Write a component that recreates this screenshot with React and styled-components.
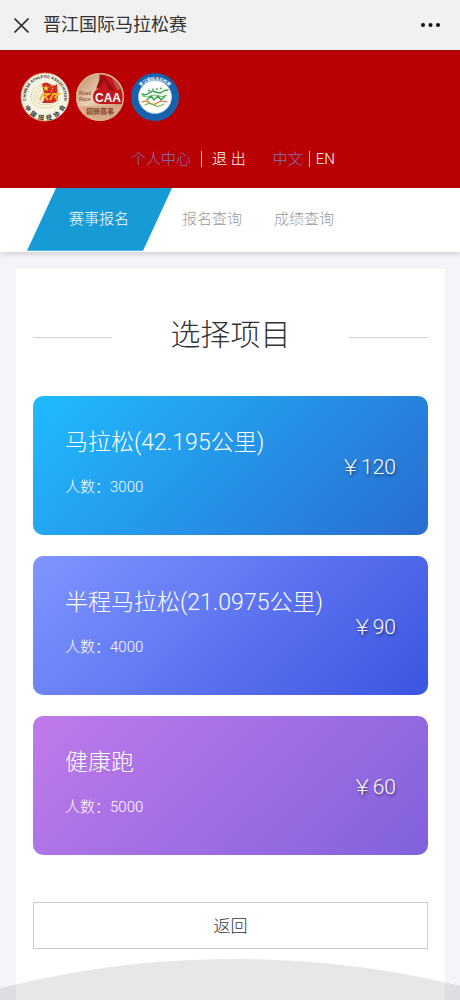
import React from "react";
import styled, { createGlobalStyle } from "styled-components";

const GlobalStyle = createGlobalStyle`
  * {
    box-sizing: border-box;
  }
  body {
    margin: 0;
    background: #f4f5f8;
    color: #333;
    font-family: Roboto, "Noto Sans CJK SC", sans-serif;
    font-weight: 300;
  }
  button {
    border: 0;
    padding: 0;
    background: none;
    color: inherit;
    font: inherit;
    cursor: pointer;
  }
  a {
    color: inherit;
    text-decoration: none;
  }
`;

const Page = styled.div`
  display: flex;
  flex-direction: column;
  min-height: 100vh;
`;

const TitleBar = styled.header`
  display: flex;
  align-items: center;
  height: 50px;
  padding: 0 18px 0 13px;
  background: #f1f1f1;
`;

const BarTitle = styled.span`
  flex: 1;
  margin-left: 13px;
  font-size: 18px;
  font-weight: 400;
  line-height: 24px;
`;

const IconButton = styled.button`
  display: flex;
`;

const Banner = styled.div`
  display: flex;
  flex-direction: column;
  justify-content: space-between;
  height: 138px;
  padding: 21px 20px 17px;
  border-top: 1px solid #a00008;
  background: #b90004;
`;

const Logos = styled.div`
  display: flex;
  gap: 5px;
`;

const UserLinks = styled.div`
  display: flex;
  justify-content: center;
  gap: 27px;
  padding-left: 6px;
  font-size: 15px;
  line-height: 24px;
`;

const LinkPair = styled.div`
  display: flex;
  align-items: center;
  gap: ${(props) => props.$gap}px;
`;

const UserLink = styled.a`
  color: ${(props) => (props.$muted ? "#7f7bb4" : "#fff")};
`;

const Divider = styled.span`
  width: 1px;
  height: 16px;
  background: #f3dcdc;
`;

const Tabs = styled.nav`
  display: flex;
  height: 64px;
  padding-left: 27px;
  background: #fff;
  box-shadow: 0 2px 6px rgba(0, 0, 0, 0.16);
`;

const Tab = styled.a`
  display: flex;
  align-items: center;
  justify-content: center;
  padding: ${(props) => (props.$active ? "0 43px 6px 42px" : "0 22px 6px 10px")};
  font-size: 15px;
  color: ${(props) => (props.$active ? "#fff" : "#999")};
  background: ${(props) => (props.$active ? "#179bd6" : "none")};
  clip-path: ${(props) =>
    props.$active ? "polygon(20% 0, 100% 0, 80% 98%, 0 98%)" : "none"};
`;

const Panel = styled.main`
  flex: 1;
  margin: 17px 15px 0 16px;
  padding: 46px 17px 51px;
  background: #fff;
`;

const Heading = styled.h1`
  display: flex;
  align-items: center;
  justify-content: space-between;
  margin: 0 0 41px;
  font-size: 30px;
  font-weight: 300;
  line-height: 40px;

  &::before,
  &::after {
    content: "";
    width: 20%;
    height: 1px;
    margin-top: 5px;
    background: #d2d2d2;
  }
`;

const EventList = styled.div`
  display: flex;
  flex-direction: column;
  gap: 21px;
`;

const EventCard = styled.button`
  display: flex;
  align-items: center;
  justify-content: space-between;
  height: 139px;
  padding: 2px 32px 0;
  border-radius: 10px;
  color: #fff;
  text-align: left;
  background: linear-gradient(
    135deg,
    ${(props) => props.$from},
    ${(props) => props.$to}
  );
`;

const EventInfo = styled.span`
  display: flex;
  flex-direction: column;
  gap: 16px;
  margin-bottom: 8px;
`;

const EventName = styled.span`
  font-size: 23px;
  line-height: 32px;
`;

const Quota = styled.span`
  font-size: 15px;
  line-height: 24px;
`;

const Price = styled.span`
  font-size: 21px;
  line-height: 32px;
  text-shadow: 1px 2px 3px rgba(0, 0, 0, 0.5);
`;

const BackButton = styled.button`
  display: block;
  width: 100%;
  height: 47px;
  margin-top: 47px;
  padding-bottom: 2px;
  border: 1px solid #ccc;
  font-size: 17px;
`;

const Arc = styled.svg`
  position: fixed;
  bottom: 0;
  left: 0;
  width: 100%;
  height: 41px;
  pointer-events: none;
`;

const events = [
  { name: "马拉松(42.195公里)", quota: 3000, price: 120, from: "#20bbff", to: "#2a6dd0" },
  { name: "半程马拉松(21.0975公里)", quota: 4000, price: 90, from: "#7f95ff", to: "#3c55e2" },
  { name: "健康跑", quota: 5000, price: 60, from: "#c07aea", to: "#8062dc" },
];

const AssociationLogo = () => (
  <svg width="50" height="50" viewBox="0 0 50 50" aria-hidden="true">
    <defs>
      <path id="ringTop" d="M7.5 33A19.2 19.2 0 1 1 42.5 33" />
      <path id="ringBottom" d="M3 26A22 22 0 0 0 47 26" />
    </defs>
    <circle cx="25" cy="25" r="24" fill="#f6f3e2" stroke="#d9a77c" strokeWidth="0.8" />
    <g fill="none" stroke="#d5d39a" strokeWidth="0.8">
      <path d="M23 12q-12 3-12 13 1 11 14 11 10 0 13-6" />
      <path d="M22 15q-8 3-8 10 1 8 11 8 7 0 10-3" />
      <path d="M21 18q-4 3-4 7 1 5 8 5 4 0 6-1" />
    </g>
    <path d="M22 12q4-3 8 0t7 0l1 15q-2 4-7 4h-9q3-3 2-9z" fill="#d12a20" />
    <path d="m26 13 .9 2.2h2.3l-1.8 1.5.7 2.3-2.1-1.3-2.1 1.3.7-2.3-1.8-1.5h2.3z" fill="#f5d33d" />
    <g fill="#f5d33d">
      <circle cx="31" cy="14" r="0.7" />
      <circle cx="32.4" cy="16.5" r="0.7" />
      <circle cx="31.4" cy="19" r="0.7" />
    </g>
    <path
      d="m20 28 3-6h6l-4 3 3 3m2 0 3-6h6l-4 3 3 3"
      fill="none"
      stroke="#efb52d"
      strokeWidth="1.8"
    />
    <text fill="#222" fontSize="4" fontWeight="700" fontFamily="Liberation Sans, sans-serif">
      <textPath href="#ringTop" startOffset="50%" textAnchor="middle">
        CHINESE ATHLETIC ASSOCIATION
      </textPath>
    </text>
    <text fill="#222" fontSize="6" fontWeight="700">
      <textPath href="#ringBottom" startOffset="50%" textAnchor="middle">
        中&#160; 国&#160; 田&#160; 径&#160; 协&#160; 会
      </textPath>
    </text>
  </svg>
);

const BronzeLogo = () => (
  <svg width="50" height="50" viewBox="0 0 50 50" aria-hidden="true">
    <defs>
      <linearGradient id="bronze" x1="0" y1="0" x2="1" y2="1">
        <stop offset="0" stopColor="#b98563" />
        <stop offset="0.45" stopColor="#ecd2b4" />
        <stop offset="1" stopColor="#b87852" />
      </linearGradient>
      <clipPath id="medal">
        <circle cx="25" cy="25" r="22.8" />
      </clipPath>
    </defs>
    <circle cx="25" cy="25" r="24" fill="url(#bronze)" />
    <g clipPath="url(#medal)">
      <path d="M24 0h28v32H26q-8 0-8-7 0-6 5-8 2-8 1-17z" fill="#c3161c" />
      <path d="m27 1-6 16 5-2 3-7 5 10 6 1z" fill="#9d0d14" />
      <path d="m36 4 12 13-6 1z" fill="#b5564a" />
      <path d="M0 34h50v16H0z" fill="#d6ac88" />
    </g>
    <circle cx="25" cy="25" r="23.4" fill="none" stroke="#d8b38c" strokeWidth="1.2" />
    <g fontFamily="Liberation Sans, sans-serif">
      <text x="4" y="23" fontSize="5" fill="#8b3c2e">Road</text>
      <text x="4" y="29" fontSize="5" fill="#8b3c2e">Race</text>
      <text x="20" y="30" fontSize="12" fontWeight="700" fill="#fff">CAA</text>
    </g>
    <text x="25" y="42" fontSize="7" fontWeight="700" fill="#8b4a31" textAnchor="middle">
      铜牌赛事
    </text>
  </svg>
);

const MarathonLogo = () => (
  <svg width="50" height="50" viewBox="0 0 50 50" aria-hidden="true">
    <defs>
      <path id="ringCity" d="M6 27A19 19 0 1 1 44 27" />
    </defs>
    <circle cx="25" cy="25" r="24" fill="#1762ad" />
    <circle cx="25" cy="25" r="16.5" fill="#fff" stroke="#a9cfe8" strokeWidth="0.8" />
    <text fill="#fff" fontSize="4" fontWeight="700">
      <textPath href="#ringCity" startOffset="50%" textAnchor="middle">
        晋江国际马拉松赛
      </textPath>
    </text>
    <g fill="none" strokeLinecap="round" strokeLinejoin="round">
      <path d="M12 22q4 2 7-1t7-1 6 0 6-2" stroke="#39a54a" strokeWidth="1.4" />
      <path d="M12 24q5 2 9 0t8 0 8-1" stroke="#6dbb5a" strokeWidth="1" />
      <path d="m17 28 4-4 3 4 4-4 3 4 4-4" stroke="#2fa04d" strokeWidth="1.3" />
      <path d="M12 30q5-2 8 1t7 0 10-1" stroke="#e2813a" strokeWidth="1.3" />
      <path d="M15 33q5-3 9 0t10-1" stroke="#7dbb46" strokeWidth="1.3" />
    </g>
    <g fill="#35a24b">
      <circle cx="19" cy="18.5" r="0.9" />
      <circle cx="23" cy="17.5" r="0.9" />
      <circle cx="27" cy="17" r="0.9" />
      <circle cx="31" cy="16.5" r="0.9" />
    </g>
  </svg>
);

const App = () => {
  return (
    <Page>
      <GlobalStyle />
      <TitleBar>
        <IconButton aria-label="关闭">
          <svg width="17" height="17" viewBox="0 0 17 17">
            <path d="M1.5 1.5l14 14M15.5 1.5l-14 14" stroke="#222" strokeWidth="1.6" />
          </svg>
        </IconButton>
        <BarTitle>晋江国际马拉松赛</BarTitle>
        <IconButton aria-label="更多">
          <svg width="22" height="6" viewBox="0 0 22 6">
            <circle cx="3" cy="3" r="2" fill="#111" />
            <circle cx="10.5" cy="3" r="2" fill="#111" />
            <circle cx="18" cy="3" r="2" fill="#111" />
          </svg>
        </IconButton>
      </TitleBar>
      <Banner>
        <Logos>
          <AssociationLogo />
          <BronzeLogo />
          <MarathonLogo />
        </Logos>
        <UserLinks>
          <LinkPair $gap={10}>
            <UserLink href="#user" $muted>个人中心</UserLink>
            <Divider />
            <UserLink href="#logout">退 出</UserLink>
          </LinkPair>
          <LinkPair $gap={6}>
            <UserLink href="#zh" $muted>中文</UserLink>
            <Divider />
            <UserLink href="#en">EN</UserLink>
          </LinkPair>
        </UserLinks>
      </Banner>
      <Tabs>
        <Tab href="#signup" $active>赛事报名</Tab>
        <Tab href="#entries">报名查询</Tab>
        <Tab href="#results">成绩查询</Tab>
      </Tabs>
      <Panel>
        <Heading>选择项目</Heading>
        <EventList>
          {events.map((event) => (
            <EventCard key={event.name} $from={event.from} $to={event.to}>
              <EventInfo>
                <EventName>{event.name}</EventName>
                <Quota>人数：{event.quota}</Quota>
              </EventInfo>
              <Price>￥{event.price}</Price>
            </EventCard>
          ))}
        </EventList>
        <BackButton>返回</BackButton>
      </Panel>
      <Arc viewBox="0 0 460 41" preserveAspectRatio="none" aria-hidden="true">
        <circle cx="235" cy="959" r="959" fill="#14141e" fillOpacity="0.1" />
      </Arc>
    </Page>
  );
};

export default App;
